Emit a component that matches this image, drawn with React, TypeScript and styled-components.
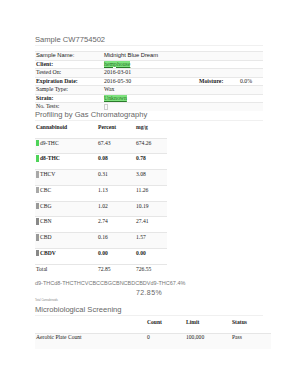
import React from "react";
import styled, { createGlobalStyle } from "styled-components";

const GlobalStyle = createGlobalStyle`
  html, body {
    margin: 0;
    padding: 0;
    background: #fff;
  }
`;

const profile = [
  { name: "d9-THC", percent: "67.43", mg: "674.26", color: "#4fd45a", bold: false },
  { name: "d8-THC", percent: "0.08", mg: "0.78", color: "#4fd45a", bold: true },
  { name: "THCV", percent: "0.31", mg: "3.08", color: "#a8a8a8", bold: false },
  { name: "CBC", percent: "1.13", mg: "11.26", color: "#a8a8a8", bold: false },
  { name: "CBG", percent: "1.02", mg: "10.19", color: "#999", bold: false },
  { name: "CBN", percent: "2.74", mg: "27.41", color: "#888", bold: false },
  { name: "CBD", percent: "0.16", mg: "1.57", color: "#999", bold: false },
  { name: "CBDV", percent: "0.00", mg: "0.00", color: "#888", bold: true },
];

const App = () => {
  return (
    <Page>
      <GlobalStyle />
      <Heading gap={5}>Sample CW7754502</Heading>

      <InfoRow striped>
        <Cell sans>Sample Name:</Cell>
        <Cell sans wide>Midnight Blue Dream</Cell>
      </InfoRow>
      <InfoRow>
        <Cell bold>Client:</Cell>
        <Cell wide><Link>hemphouse</Link></Cell>
      </InfoRow>
      <InfoRow striped>
        <Cell>Tested On:</Cell>
        <Cell wide>2016-03-01</Cell>
      </InfoRow>
      <InfoRow>
        <Cell bold>Expiration Date:</Cell>
        <Cell>2016-05-30</Cell>
        <Cell bold>Moisture:</Cell>
        <Cell>0.0%</Cell>
      </InfoRow>
      <InfoRow striped>
        <Cell>Sample Type:</Cell>
        <Cell wide>Wax</Cell>
      </InfoRow>
      <InfoRow>
        <Cell bold>Strain:</Cell>
        <Cell wide><Link>Unknown</Link></Cell>
      </InfoRow>
      <InfoRow striped>
        <Cell>No. Tests:</Cell>
        <Cell wide><Tests /></Cell>
      </InfoRow>

      <Heading gap={0} pull>Profiling by Gas Chromatography</Heading>
      <ProfileHead>
        <Cell bold>Cannabinoid</Cell>
        <Cell bold>Percent</Cell>
        <Cell bold>mg/g</Cell>
      </ProfileHead>
      {profile.map((p, i) => (
        <ProfileRow key={p.name} striped={i % 2 === 0}>
          <Cell bold={p.bold}>
            <Swatch color={p.color} />
            {p.name}
          </Cell>
          <Cell bold={p.bold}>{p.percent}</Cell>
          <Cell bold={p.bold}>{p.mg}</Cell>
        </ProfileRow>
      ))}
      <ProfileRow>
        <Cell>Total</Cell>
        <Cell>72.85</Cell>
        <Cell>726.55</Cell>
      </ProfileRow>

      <Legend>d9-THCd8-THCTHCVCBCCBGCBNCBDCBDVd9-THC67.4%</Legend>
      <Total>72.85%</Total>
      <TinyCaption>Total Cannabinoids</TinyCaption>

      <Heading gap={0} spaced>Microbiological Screening</Heading>
      <MicroHead>
        <Cell />
        <Cell bold>Count</Cell>
        <Cell bold>Limit</Cell>
        <Cell bold>Status</Cell>
      </MicroHead>
      <MicroRow striped>
        <Cell>Aerobic Plate Count</Cell>
        <Cell>0</Cell>
        <Cell>100,000</Cell>
        <Cell>Pass</Cell>
      </MicroRow>
    </Page>
  );
};

export default App;

const dots = `
  background-color: #fafafa;
  background-image: radial-gradient(circle, #e2e2e2 0.6px, transparent 0.7px);
  background-size: 4px 4px;
`;

const sansStack = '"Liberation Sans", Arial, sans-serif';

const Page = styled.div`
  width: 236px;
  padding: 35px 0 30px 35px;
  font-family: "Liberation Serif", "Times New Roman", serif;
  font-size: 5.6px;
  color: #222;
`;

const Heading = styled.div<{ gap: number; spaced?: boolean; pull?: boolean }>`
  font-family: ${sansStack};
  font-size: 7.6px;
  color: #666;
  line-height: 10px;
  border-bottom: 1px solid #f0f0f0;
  width: 228px;
  margin-top: ${(p) => (p.spaced ? "2px" : p.pull ? "-1px" : "0")};
  margin-bottom: ${(p) => p.gap}px;
`;

const Cell = styled.div<{ bold?: boolean; sans?: boolean; wide?: boolean }>`
  padding-left: 1px;
  white-space: nowrap;
  font-weight: ${(p) => (p.bold ? 700 : 400)};
  font-family: ${(p) => (p.sans ? sansStack : "inherit")};
  font-size: ${(p) => (p.sans ? "5.8px" : "inherit")};
  grid-column: ${(p) => (p.wide ? "2 / 5" : "auto")};
`;

const InfoRow = styled.div<{ striped?: boolean }>`
  display: grid;
  grid-template-columns: 69px 95px 41px 23px;
  align-items: center;
  box-sizing: border-box;
  width: 228px;
  height: 8.5px;
  line-height: 7.5px;
  font-size: 5.8px;
  border-top: 1px solid #e8e8e8;
  ${(p) => (p.striped ? dots : "")}
  ${Cell} {
    padding-left: 0;
  }
  ${Cell}:first-child {
    padding-left: 1px;
  }
`;

const Link = styled.span`
  color: #2a7a2a;
  background: #7ee27e;
  text-decoration: underline;
`;

const Tests = styled.span`
  display: inline-block;
  width: 2px;
  height: 4px;
  border: 1px solid #ccc;
  vertical-align: middle;
`;

const ProfileHead = styled.div`
  display: grid;
  grid-template-columns: 62px 38px 32px;
  width: 132px;
  height: 17px;
  box-sizing: border-box;
  padding-top: 3px;
  line-height: 6px;
`;

const ProfileRow = styled.div<{ striped?: boolean }>`
  display: grid;
  grid-template-columns: 62px 38px 32px;
  align-items: start;
  width: 132px;
  height: 15.75px;
  box-sizing: border-box;
  padding-top: 1px;
  line-height: 6px;
  border-top: 1px solid #e6e6e6;
  ${(p) => (p.striped ? dots : "")}
`;

const Swatch = styled.span<{ color: string }>`
  display: inline-block;
  width: 2.5px;
  height: 6.5px;
  background: ${(p) => p.color};
  margin-right: 1.5px;
  vertical-align: -1.5px;
`;

const Legend = styled.div`
  font-family: ${sansStack};
  font-size: 5.5px;
  line-height: 6px;
  color: #777;
  margin-top: 1px;
  white-space: nowrap;
`;

const Total = styled.div`
  width: 228px;
  text-align: center;
  font-family: ${sansStack};
  font-size: 7px;
  line-height: 8px;
  letter-spacing: 0.4px;
  color: #666;
  margin-top: 3px;
`;

const TinyCaption = styled.div`
  font-family: ${sansStack};
  font-size: 2.7px;
  line-height: 4px;
  color: #888;
  margin-top: 2px;
`;

const MicroHead = styled.div`
  display: grid;
  grid-template-columns: 111px 39px 46px 40px;
  width: 236px;
  height: 17px;
  box-sizing: border-box;
  padding-top: 3px;
  line-height: 6px;
`;

const MicroRow = styled.div<{ striped?: boolean }>`
  display: grid;
  grid-template-columns: 111px 39px 46px 40px;
  width: 236px;
  height: 15.75px;
  box-sizing: border-box;
  line-height: 6px;
  border-top: 1px solid #e6e6e6;
  ${(p) => (p.striped ? dots : "")}
`;
